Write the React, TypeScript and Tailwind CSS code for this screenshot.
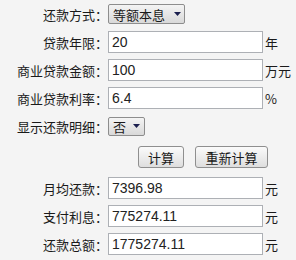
const font = { fontFamily: '"Noto Sans CJK SC", "Liberation Sans", sans-serif' }

function Label({ children }: { children: React.ReactNode }) {
  return (
    <div className="flex w-[108px] shrink-0 justify-end text-[13px] leading-none text-[#1a1a1a]">
      <span>{children}</span>
      <span className="inline-block w-[13px] text-left">：</span>
    </div>
  )
}

function Field({ value, unit }: { value: string; unit?: string }) {
  return (
    <>
      <div className="flex h-[22px] w-[155px] shrink-0 items-center border border-[#adb0b5] bg-white pl-[3px] font-['Liberation_Sans',sans-serif] text-[14px] text-[#222]">
        {value}
      </div>
      {unit ? <div className="ml-[2px] text-[13px] leading-none text-[#1a1a1a]">{unit}</div> : null}
    </>
  )
}

function Arrow() {
  return (
    <svg width="7" height="4" viewBox="0 0 7 4" className="shrink-0">
      <path d="M0 0 L7 0 L3.5 4 Z" fill="#1b1f4e" />
    </svg>
  )
}

function Select({ value, w, gap }: { value: string; w: string; gap: string }) {
  return (
    <div
      className={`flex shrink-0 items-center rounded-[2px] border border-[#8d8d8d] bg-gradient-to-b from-[#f4f4f4] to-[#d9d9d9] pl-[4px] text-[13px] leading-none text-[#1a1a1a] ${w}`}
    >
      <span>{value}</span>
      <span className={gap}>
        <Arrow />
      </span>
    </div>
  )
}

function Button({ children, w }: { children: React.ReactNode; w: string }) {
  return (
    <div
      className={`flex h-[22px] items-center justify-center rounded-[3px] border border-[#8f8f8f] bg-gradient-to-b from-[#fbfbfb] to-[#dedede] text-[13px] leading-none text-[#1a1a1a] ${w}`}
    >
      {children}
    </div>
  )
}

export default function App() {
  return (
    <div className="h-[260px] w-[296px] bg-[#f4f4f4]" style={font}>
      <div className="flex h-[28px] items-center">
        <Label>还款方式</Label>
        <Select value="等额本息" w="h-[20px] w-[77px]" gap="ml-[9px]" />
      </div>
      <div className="flex h-[28px] items-center">
        <Label>贷款年限</Label>
        <Field value="20" unit="年" />
      </div>
      <div className="flex h-[28px] items-center">
        <Label>商业贷款金额</Label>
        <Field value="100" unit="万元" />
      </div>
      <div className="flex h-[28px] items-center">
        <Label>商业贷款利率</Label>
        <Field value="6.4" unit="%" />
      </div>
      <div className="flex h-[28px] items-center">
        <Label>显示还款明细</Label>
        <Select value="否" w="h-[19px] w-[37px]" gap="ml-[7px]" />
      </div>
      <div className="flex h-[34px] items-center gap-[11px] pl-[138px]">
        <Button w="w-[46px]">计算</Button>
        <Button w="w-[73px]">重新计算</Button>
      </div>
      <div className="flex h-[28px] items-center">
        <Label>月均还款</Label>
        <Field value="7396.98" unit="元" />
      </div>
      <div className="flex h-[28px] items-center">
        <Label>支付利息</Label>
        <Field value="775274.11" unit="元" />
      </div>
      <div className="flex h-[28px] items-center">
        <Label>还款总额</Label>
        <Field value="1775274.11" unit="元" />
      </div>
    </div>
  )
}
